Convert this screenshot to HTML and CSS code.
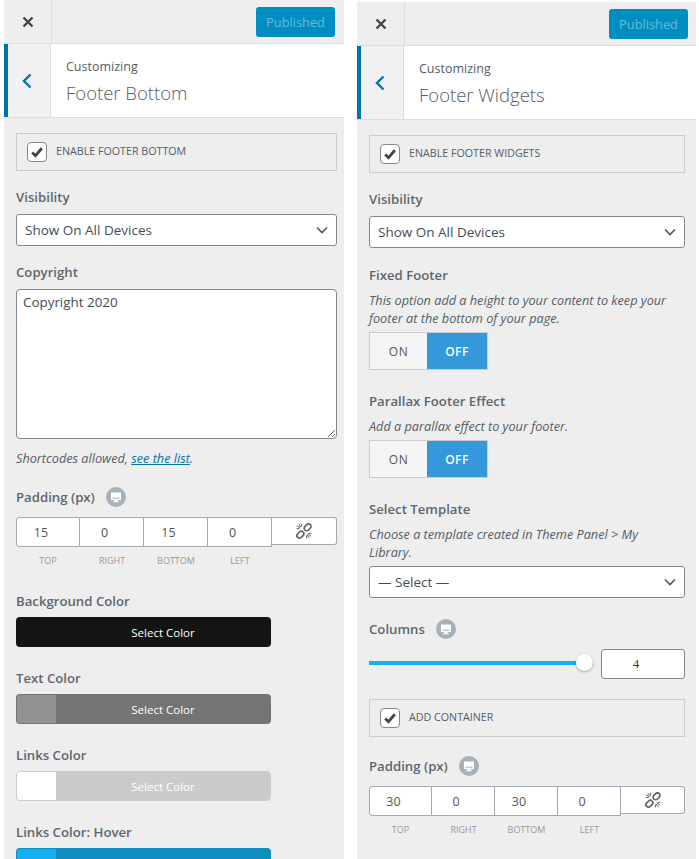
FILE: index.html
```html
<!DOCTYPE html>
<html lang="en">
<head>
  <meta charset="UTF-8" />
  <meta name="viewport" content="width=device-width, initial-scale=1.0"/>
  <title>Customizer Footer Panels</title>
  <link rel="stylesheet" href="styles.css">
</head>
<body>

  <svg class="defs" width="0" height="0">
    <symbol id="icon-close" viewBox="0 0 14 14"><path d="M2.5 2.5l9 9M11.5 2.5l-9 9" fill="none" stroke="currentColor" stroke-width="2.4"/></symbol>
    <symbol id="icon-back" viewBox="0 0 12 18"><path d="M9.5 2.5L3 9l6.5 6.5" fill="none" stroke="currentColor" stroke-width="2.4"/></symbol>
    <symbol id="icon-check" viewBox="0 0 16 16"><path d="M2.5 8.5l3.8 3.8 7.2-8.6" fill="none" stroke="currentColor" stroke-width="3.2"/></symbol>
    <symbol id="icon-device" viewBox="0 0 20 20"><circle cx="10" cy="10" r="10" fill="#a7b1ba"/><path d="M5 5.5h10v7.5h-3.5v1.2h1.5v1H7v-1h1.5v-1.2H5z" fill="#fff"/><path d="M6.5 11.2h7" stroke="#a7b1ba" stroke-width="1"/></symbol>
    <symbol id="icon-unlink" viewBox="0 0 16 16"><g fill="none" stroke="currentColor"><rect x="7.8" y="1.8" width="7.6" height="5" rx="2.5" stroke-width="1.7" transform="rotate(-45 11.6 4.3)"/><rect x=".6" y="9.2" width="7.6" height="5" rx="2.5" stroke-width="1.7" transform="rotate(-45 4.4 11.7)"/><path d="M.8 2.8l3.4 2M2.8.8l2 3.4M.6 5.6h3M5.6.6v3M15.2 13.2l-3.4-2M13.2 15.2l-2-3.4M15.4 10.4h-3M10.4 15.4v-3" stroke-width="1"/></g></symbol>
  </svg>

  <div class="panel">
    <div class="topbar">
      <div class="close"><svg class="close-icon"><use href="#icon-close"/></svg></div>
      <button class="publish">Published</button>
    </div>
    <div class="section-title">
      <div class="back"><svg class="back-icon"><use href="#icon-back"/></svg></div>
      <div class="title-text">
        <span class="crumb">Customizing</span>
        <h2>Footer Bottom</h2>
      </div>
    </div>
    <div class="controls">
      <label class="check-box">
        <span class="check"><svg><use href="#icon-check"/></svg></span>
        <span class="check-label">Enable Footer Bottom</span>
      </label>

      <div class="control">
        <div class="label">Visibility</div>
        <select class="dropdown"><option>Show On All Devices</option></select>
      </div>

      <div class="control">
        <div class="label">Copyright</div>
        <textarea class="copyright">Copyright 2020</textarea>
        <p class="hint hint-after">Shortcodes allowed, <a href="#">see the list</a>.</p>
      </div>

      <div class="control control-padding">
        <div class="label">Padding (px) <svg class="device"><use href="#icon-device"/></svg></div>
        <div class="dimensions">
          <div class="dim"><input value="15"><span>Top</span></div>
          <div class="dim"><input value="0"><span>Right</span></div>
          <div class="dim"><input value="15"><span>Bottom</span></div>
          <div class="dim"><input value="0"><span>Left</span></div>
          <button class="link-btn"><svg><use href="#icon-unlink"/></svg></button>
        </div>
      </div>

      <div class="control color-control">
        <div class="label">Background Color</div>
        <button class="color-btn color-black"><i></i>Select Color</button>
      </div>
      <div class="control color-control">
        <div class="label">Text Color</div>
        <button class="color-btn color-grey"><i></i>Select Color</button>
      </div>
      <div class="control color-control">
        <div class="label">Links Color</div>
        <button class="color-btn color-white"><i></i>Select Color</button>
      </div>
      <div class="control color-control">
        <div class="label">Links Color: Hover</div>
        <button class="color-btn color-blue"><i></i></button>
      </div>
    </div>
  </div>

  <div class="panel panel-right">
    <div class="topbar">
      <div class="close"><svg class="close-icon"><use href="#icon-close"/></svg></div>
      <button class="publish">Published</button>
    </div>
    <div class="section-title">
      <div class="back"><svg class="back-icon"><use href="#icon-back"/></svg></div>
      <div class="title-text">
        <span class="crumb">Customizing</span>
        <h2>Footer Widgets</h2>
      </div>
    </div>
    <div class="controls">
      <label class="check-box">
        <span class="check"><svg><use href="#icon-check"/></svg></span>
        <span class="check-label">Enable Footer Widgets</span>
      </label>

      <div class="control">
        <div class="label">Visibility</div>
        <select class="dropdown"><option>Show On All Devices</option></select>
      </div>

      <div class="control control-fixed">
        <div class="label">Fixed Footer</div>
        <p class="hint">This option add a height to your content to keep your footer at the bottom of your page.</p>
        <div class="toggle"><span>On</span><span class="active">Off</span></div>
      </div>

      <div class="control control-tight">
        <div class="label">Parallax Footer Effect</div>
        <p class="hint">Add a parallax effect to your footer.</p>
        <div class="toggle"><span>On</span><span class="active">Off</span></div>
      </div>

      <div class="control control-tight">
        <div class="label">Select Template</div>
        <p class="hint">Choose a template created in Theme Panel &gt; My Library.</p>
        <select class="dropdown dropdown-template"><option>— Select —</option></select>
      </div>

      <div class="control control-tight">
        <div class="label">Columns <svg class="device"><use href="#icon-device"/></svg></div>
        <div class="slider-row">
          <div class="slider"><span class="knob"></span></div>
          <input class="slider-value" value="4">
        </div>
      </div>

      <label class="check-box check-box-second">
        <span class="check"><svg><use href="#icon-check"/></svg></span>
        <span class="check-label">Add Container</span>
      </label>

      <div class="control control-padding control-padding-right">
        <div class="label">Padding (px) <svg class="device"><use href="#icon-device"/></svg></div>
        <div class="dimensions">
          <div class="dim"><input value="30"><span>Top</span></div>
          <div class="dim"><input value="0"><span>Right</span></div>
          <div class="dim"><input value="30"><span>Bottom</span></div>
          <div class="dim"><input value="0"><span>Left</span></div>
          <button class="link-btn"><svg><use href="#icon-unlink"/></svg></button>
        </div>
      </div>
    </div>
  </div>

</body>
</html>
```

FILE: styles.css
```css
html, body {
  height: 859px;
  overflow: hidden;
}

body {
  margin: 0;
  padding-left: 4px;
  display: flex;
  align-items: flex-start;
  gap: 13px;
  background: #fff;
  font-family: "Open Sans", sans-serif;
  color: #555d66;
}

.defs {
  position: absolute;
}

.panel {
  width: 340px;
  height: 859px;
  background: #eee;
  flex: none;
}

.panel-right {
  width: 339px;
  margin-top: 2px;
}

.topbar {
  height: 43px;
  display: flex;
  justify-content: space-between;
  border-bottom: 1px solid #ddd;
}

.close {
  width: 47px;
  display: flex;
  align-items: center;
  justify-content: center;
  border-right: 1px solid #ddd;
  color: #444;
}

.close-icon {
  width: 14px;
  height: 14px;
}

.publish {
  width: 79px;
  height: 30px;
  margin: 7px 9px 0 0;
  padding: 0;
  border: 0;
  border-radius: 3px;
  background: #008ec2;
  color: #66bbda;
  font: 12.8px "Open Sans", sans-serif;
}

.panel-right .publish {
  margin-right: 8px;
}

.section-title {
  height: 73px;
  display: flex;
  background: #fff;
  border-bottom: 1px solid #ddd;
}

.back {
  width: 38px;
  padding-right: 4px;
  display: flex;
  align-items: center;
  justify-content: center;
  background: #f1f1f3;
  border-left: 4px solid #0073aa;
  border-right: 1px solid #ddd;
  color: #0073aa;
}

.back-icon {
  width: 12px;
  height: 18px;
}

.title-text {
  padding: 14px 0 0 15px;
}

.crumb {
  display: block;
  font-size: 12.5px;
  line-height: 18px;
}

h2 {
  margin: 4px 0 0;
  font-size: 18.5px;
  font-weight: 300;
  line-height: 26px;
  color: #555d66;
}

.controls {
  padding: 15px 7px 0 12px;
}

.panel-right .controls {
  padding-right: 11px;
}

.check-box {
  height: 36px;
  display: flex;
  align-items: center;
  gap: 9px;
  padding-left: 10px;
  border: 1px solid #ccc;
  font-size: 10.7px;
  text-transform: uppercase;
}

.check {
  width: 18px;
  height: 18px;
  display: flex;
  align-items: center;
  justify-content: center;
  background: #fff;
  border: 1px solid #7e8993;
  border-radius: 4px;
  color: #444;
}

.check svg {
  width: 14px;
  height: 14px;
}

.check-label {
  margin-bottom: 2px;
}

.check-box-second {
  margin-top: 20px;
}

.control {
  margin-top: 16px;
}

.control-tight {
  margin-top: 21px;
}

.control-fixed {
  margin-top: 17px;
}

.label {
  display: flex;
  align-items: center;
  gap: 11px;
  height: 20px;
  margin-bottom: 7px;
  font-size: 13.2px;
  font-weight: 600;
  color: #5f666e;
}

.device {
  width: 20px;
  height: 20px;
}

.dropdown {
  appearance: none;
  display: block;
  width: 100%;
  height: 32px;
  padding: 0 24px 0 8px;
  background: #fff url("data:image/svg+xml,%3Csvg xmlns='http://www.w3.org/2000/svg' width='12' height='8'%3E%3Cpath d='M1 1.5l5 5 5-5' fill='none' stroke='%23555' stroke-width='1.6'/%3E%3C/svg%3E") no-repeat right 8px center;
  border: 1px solid #7e8993;
  border-radius: 3px;
  color: #444c54;
  font: 13.5px "Open Sans", sans-serif;
}

.dropdown-template {
  margin-top: 4px;
}

.copyright {
  display: block;
  box-sizing: border-box;
  width: 100%;
  height: 150px;
  padding: 2px 6px;
  background: #fff;
  border: 1px solid #7e8993;
  border-radius: 4px;
  color: #444c54;
  font: 13.4px/20px "Open Sans", sans-serif;
}

.hint {
  max-width: 310px;
  margin: -1px 0 5px;
  font-size: 12.7px;
  font-style: italic;
  line-height: 18px;
}

.hint-after {
  margin: 10px 0 0;
}

.hint a {
  color: #0073aa;
}

.control-padding {
  margin-top: 20px;
}

.control-padding .label {
  margin-bottom: 10px;
}

.control-padding-right {
  margin-top: 19px;
}

.dimensions {
  display: flex;
  align-items: flex-start;
}

.dim {
  width: 64px;
  flex: none;
}

.panel-right .dim {
  width: 63px;
}

.dim input {
  display: block;
  box-sizing: border-box;
  width: 100%;
  height: 30px;
  margin: 0;
  padding: 0 14px 0 0;
  border: 1px solid #a0a9b2;
  border-left-width: 0;
  background: #fff;
  color: #555;
  font: 12.5px "Open Sans", sans-serif;
  text-align: center;
}

.dim:first-child input {
  border-left-width: 1px;
  border-radius: 3px 0 0 3px;
}

.dim span {
  display: block;
  margin-top: 8px;
  font-size: 9px;
  line-height: 12px;
  color: #999;
  text-align: center;
  text-transform: uppercase;
}

.link-btn {
  flex: 1;
  height: 28px;
  padding: 0;
  background: #fff;
  border: 1px solid #a0a9b2;
  border-left-width: 0;
  border-radius: 0 3px 3px 0;
  color: #666;
}

.link-btn svg {
  display: block;
  width: 16px;
  height: 16px;
  margin: 0 auto;
}

.color-control {
  margin-top: 24px;
}

.color-control .label {
  margin-bottom: 6px;
}

.color-control + .color-control {
  margin-top: 21px;
}

.color-btn {
  position: relative;
  display: block;
  width: 255px;
  height: 30px;
  padding: 0 0 0 39px;
  border: 1px solid transparent;
  border-radius: 4px;
  color: #fff;
  font: 11.5px "Open Sans", sans-serif;
  overflow: hidden;
}

.color-btn i {
  position: absolute;
  left: 0;
  top: 0;
  bottom: 0;
  width: 39px;
}

.color-black {
  background: #141414;
}

.color-grey {
  background: #747474;
}

.color-grey i {
  background: #929292;
}

.color-white {
  background: #cbcbcb;
  border-color: #ccc;
}

.color-white i {
  background: #fff;
}

.color-blue {
  background: #0f8cc0;
}

.color-blue i {
  background: #13aff0;
}

.toggle {
  display: flex;
  width: 119px;
  height: 38px;
  box-sizing: border-box;
  border: 1px solid #ccc;
  font-size: 12px;
  letter-spacing: 0.5px;
  text-transform: uppercase;
}

.toggle span {
  width: 57px;
  display: flex;
  align-items: center;
  justify-content: center;
  background: #f5f5f5;
  color: #555;
}

.toggle .active {
  width: 60px;
  background: #3498db;
  color: #fff;
  font-weight: 600;
}

.slider-row {
  display: flex;
  align-items: center;
  gap: 8px;
  margin-top: 10px;
}

.slider {
  position: relative;
  flex: 1;
  height: 4px;
  margin-top: -2px;
  background: #13aff0;
}

.knob {
  position: absolute;
  right: 0;
  top: -7px;
  width: 17px;
  height: 17px;
  border-radius: 50%;
  background: #fff;
  box-shadow: 0 1px 3px rgba(0, 0, 0, 0.3);
}

.slider-value {
  box-sizing: border-box;
  width: 84px;
  height: 30px;
  margin: 0;
  padding: 0 14px 0 0;
  border: 1px solid #7e8993;
  border-radius: 3px;
  background: #fff;
  color: #32373c;
  font: 13px "Liberation Serif", serif;
  text-align: center;
}
```
